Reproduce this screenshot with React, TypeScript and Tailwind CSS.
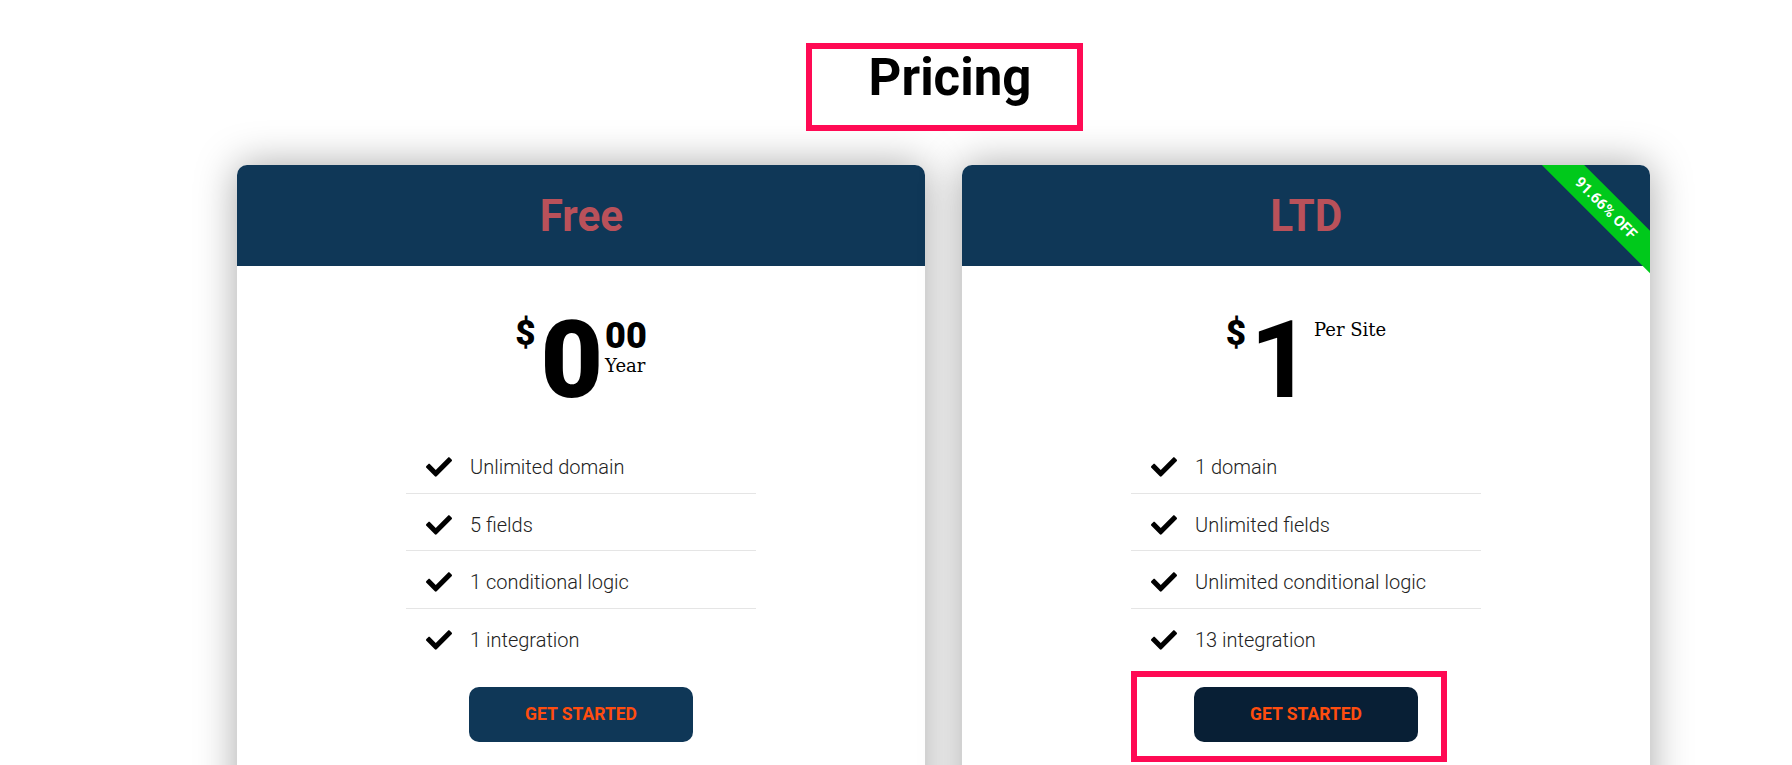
import React from "react";
import { FaCheck } from "react-icons/fa";

type Plan = {
  name: string;
  features: string[];
  ribbon?: string;
  dark?: boolean;
};

const plans: Plan[] = [
  {
    name: "Free",
    features: ["Unlimited domain", "5 fields", "1 conditional logic", "1 integration"],
  },
  {
    name: "LTD",
    features: ["1 domain", "Unlimited fields", "Unlimited conditional logic", "13 integration"],
    ribbon: "91.66% OFF",
    dark: true,
  },
];

const FreePrice = () => (
  <div className="flex items-start justify-center">
    <span className="mt-[10px] text-[35px] font-black leading-none">$</span>
    <span className="ml-[5px] text-[108px] font-black leading-none">0</span>
    <div className="ml-[2px] mt-[12px] flex flex-col">
      <span className="text-[36px] font-black leading-none">00</span>
      <span className="mt-[3px] text-[18px] leading-none font-['DejaVu_Serif',serif]">Year</span>
    </div>
  </div>
);

const LtdPrice = () => (
  <div className="flex items-start justify-center">
    <span className="mt-[10px] text-[35px] font-black leading-none">$</span>
    <span className="ml-[4px] text-[108px] font-bold leading-none">1</span>
    <span className="ml-[2px] mt-[15px] text-[18px] leading-none font-['DejaVu_Serif',serif]">
      Per Site
    </span>
  </div>
);

const PlanCard = ({ plan }: { plan: Plan }) => (
  <div className="relative w-[688px] h-[700px] shrink-0 overflow-hidden rounded-t-[10px] bg-white shadow-[0_0_40px_rgba(0,0,0,0.35)]">
    {/* Header */}
    <div className="flex h-[101px] items-center justify-center bg-[#0f3757]">
      <h3 className="scale-x-[0.94] text-[45px] font-bold leading-none text-[#b9515a]">{plan.name}</h3>
    </div>

    {plan.ribbon && (
      <div className="absolute right-[-36px] top-[28px] flex h-[30px] w-[160px] rotate-45 items-center justify-center bg-[#00c91b] text-[15px] font-bold text-white">
        {plan.ribbon}
      </div>
    )}

    {/* Price */}
    <div className="pt-[40px]">{plan.dark ? <LtdPrice /> : <FreePrice />}</div>

    {/* Features */}
    <ul className="mx-auto mt-[22px] w-[350px]">
      {plan.features.map((f, i) => (
        <li
          key={f}
          className={`flex items-center pl-[20px] pt-[17px] pb-[11.7px] text-[20px] font-light leading-[28px] text-[#222] ${
            i < plan.features.length - 1 ? "border-b border-[#e5e5e5]" : ""
          }`}
        >
          <FaCheck className="h-[26px] w-[26px] shrink-0 text-black" />
          <span className="ml-[18px]">{f}</span>
        </li>
      ))}
    </ul>

    {/* Button */}
    <div className="mt-[21px] flex justify-center">
      <button
        className={`h-[55px] w-[224px] rounded-[10px] text-[17.5px] font-bold uppercase text-[#ff4d0f] ${
          plan.dark ? "bg-[#081f35]" : "bg-[#0f3757]"
        }`}
      >
        Get Started
      </button>
    </div>
  </div>
);

export default function App() {
  return (
    <div className="relative h-[765px] w-full overflow-hidden bg-white font-['Roboto',sans-serif] text-black">
      <div className="ml-[237px] w-[1412px]">
        <h2 className="pl-[14px] pt-[48px] text-center text-[51px] font-bold leading-[60px]">Pricing</h2>

        <div className="mt-[57px] flex gap-[37px]">
          {plans.map((p) => (
            <PlanCard key={p.name} plan={p} />
          ))}
        </div>
      </div>

      {/* annotation boxes */}
      <div className="pointer-events-none absolute left-[806px] top-[43px] h-[88px] w-[277px] border-[6px] border-[#ff0a54]" />
      <div className="pointer-events-none absolute left-[1131px] top-[671px] h-[91px] w-[316px] border-[6px] border-[#ff0a54]" />
    </div>
  );
}
